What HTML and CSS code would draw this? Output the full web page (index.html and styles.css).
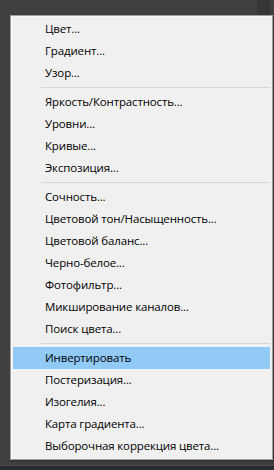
FILE: index.html
```html
<!DOCTYPE html>
<html lang="ru">
  <head>
    <meta charset="UTF-8" />
    <meta name="viewport" content="width=device-width, initial-scale=1" />
    <title>Коррекция</title>
    <link rel="stylesheet" href="styles.css">
  </head>
  <body>
    <div class="workspace">
      <ul class="menu">
        <li class="menu-item">Цвет...</li>
        <li class="menu-item">Градиент...</li>
        <li class="menu-item">Узор...</li>
        <li class="menu-sep"></li>
        <li class="menu-item">Яркость/Контрастность...</li>
        <li class="menu-item">Уровни...</li>
        <li class="menu-item">Кривые...</li>
        <li class="menu-item">Экспозиция...</li>
        <li class="menu-sep"></li>
        <li class="menu-item">Сочность...</li>
        <li class="menu-item">Цветовой тон/Насыщенность...</li>
        <li class="menu-item">Цветовой баланс...</li>
        <li class="menu-item">Черно-белое...</li>
        <li class="menu-item">Фотофильтр...</li>
        <li class="menu-item">Микширование каналов...</li>
        <li class="menu-item">Поиск цвета...</li>
        <li class="menu-sep"></li>
        <li class="menu-item active">Инвертировать</li>
        <li class="menu-item">Постеризация...</li>
        <li class="menu-item">Изогелия...</li>
        <li class="menu-item">Карта градиента...</li>
        <li class="menu-item">Выборочная коррекция цвета...</li>
      </ul>
    </div>
    <div class="panel-bar"></div>
  </body>
</html>
```

FILE: styles.css
```css
:root {
  --ps-bg: #404040;
  --ps-dark: #363636;
  --menu-bg: #f0f0f0;
  --menu-border: #a0a0a0;
  --hover: #91c9f7;
  --sep: #d7d7d7;
  --text: #000;
}
html,
body {
  height: 100%;
}
body {
  margin: 0;
  background:
    linear-gradient(to right, transparent 257px, var(--ps-dark) 257px, var(--ps-dark) 270px, transparent 270px) top / 100% 15px no-repeat,
    var(--ps-bg);
  font-family: "Open Sans", "Noto Sans", Arial, sans-serif;
  display: flex;
  flex-direction: column;
}
.workspace {
  padding: 15px 1px 0 10px;
}
.menu {
  list-style: none;
  margin: 0;
  padding: 2px;
  background: var(--menu-bg);
  border: 1px solid var(--menu-border);
  box-shadow: inset 1px 1px 0 #fafafa, 1px 1px 2px rgba(0, 0, 0, 0.35);
}
.menu-item {
  height: 22px;
  line-height: 22px;
  padding-left: 32px;
  font-size: 11.5px;
  letter-spacing: -0.15px;
  color: var(--text);
  white-space: nowrap;
}
.menu-item.active {
  background: var(--hover);
}
.menu-sep {
  height: 7px;
  margin-left: 28px;
  display: flex;
  flex-direction: column;
  justify-content: center;
}
.menu-sep::before {
  content: "";
  display: block;
  height: 1px;
  background: var(--sep);
}
.panel-bar {
  margin-top: 5px;
  flex: 1;
  background: #272b2e;
  border-top: 1px solid #4a4a4a;
}
```
